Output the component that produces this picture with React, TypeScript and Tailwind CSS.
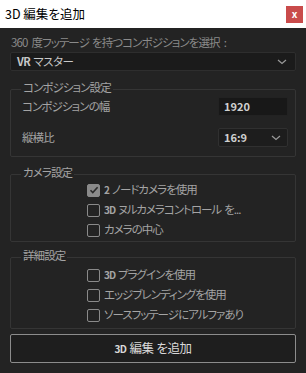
import React from 'react';

const Chevron: React.FC = () => (
    <svg width="10" height="6" viewBox="0 0 10 6" className="text-[#9a9a9a]">
        <path d="M1 1l4 3.5L9 1" fill="none" stroke="currentColor" strokeWidth="1.2" />
    </svg>
);

const Check: React.FC<{ checked?: boolean; label: React.ReactNode }> = ({ checked, label }) => (
    <div className="flex items-center h-[20px] gap-[4px]">
        <div className={`w-[13px] h-[13px] border-[1.5px] border-[#8a8a8a] rounded-[2px] flex items-center justify-center ${checked ? 'bg-[#8a8a8a]' : ''}`}>
            {checked && (
                <svg width="10" height="10" viewBox="0 0 10 10">
                    <path d="M1.5 5.2l2.3 2.3L8.6 2.3" fill="none" stroke="#2a2a2a" strokeWidth="1.6" />
                </svg>
            )}
        </div>
        <span className="text-[11.5px] tracking-[-1px] text-[#a4a4a4] leading-none whitespace-nowrap">{label}</span>
    </div>
);

const Group: React.FC<{ title: string; children: React.ReactNode; className?: string }> = ({ title, children, className }) => (
    <div className={`relative border border-[#353535] rounded-[2px] mx-[10px] ${className ?? ''}`}>
        <span className="absolute -top-[8px] left-[10px] px-[2px] bg-[#232323] text-[11.5px] tracking-[-0.9px] leading-none text-[#a4a4a4]">{title}</span>
        {children}
    </div>
);

export default function App() {
    return (
        <div className="w-[306px] h-[373px] bg-[#232323] flex flex-col overflow-hidden font-['Noto_Sans_CJK_JP','Noto_Sans',sans-serif] [font-feature-settings:'palt']">
            <div className="h-[28px] bg-white flex items-center justify-between pl-[5px] pr-[3px] shrink-0">
                <span className="text-[12.5px] text-black leading-none">3D 編集を追加</span>
                <div className="w-[17px] h-[17px] bg-[#c94b4b] flex items-center justify-center text-white text-[10px] font-bold leading-none">x</div>
            </div>

            <div className="mt-[7px] h-[16px] px-[11px] flex items-center text-[11.5px] tracking-[-0.9px] text-[#8a8a8a] leading-none whitespace-nowrap">
                <span className="mr-[4px]">360</span>度フッテージ<span className="ml-[3px]">を持つコンポジションを選択</span><span className="ml-[4px]">:</span>
            </div>
            <div className="mt-[1px] mx-[10px] h-[19px] bg-[#1b1b1b] border border-[#2e2e2e] rounded-[2px] flex items-center justify-between pl-[6px] pr-[8px]">
                <span className="text-[11.5px] tracking-[-0.5px] text-[#c8c8c8] leading-none"><b className="text-[11px] mr-[3px]">VR</b>マスター</span>
                <Chevron />
            </div>

            <Group title="コンポジション設定" className="mt-[18px] h-[68px]">
                <div className="flex flex-col pl-[11px] pr-[7px] pt-[7px] gap-[12px]">
                    <div className="flex items-center justify-between h-[19px]">
                        <span className="text-[11.5px] tracking-[-0.9px] text-[#a4a4a4] leading-none">コンポジションの幅</span>
                        <div className="w-[70px] h-[19px] bg-[#181818] border border-[#222] flex items-center pl-[5px] text-[11px] text-[#d0d0d0] leading-none font-bold">1920</div>
                    </div>
                    <div className="flex items-center justify-between h-[19px]">
                        <span className="text-[11.5px] tracking-[-0.9px] text-[#a4a4a4] leading-none">縦横比</span>
                        <div className="w-[70px] h-[19px] bg-[#1d1d1d] border border-[#303030] rounded-[2px] flex items-center justify-between pl-[5px] pr-[6px] text-[11px] text-[#d0d0d0] leading-none font-bold">
                            16:9
                            <Chevron />
                        </div>
                    </div>
                </div>
            </Group>

            <Group title="カメラ設定" className="mt-[17px] h-[68px]">
                <div className="flex flex-col pl-[76px] pt-[5px]">
                    <Check checked label={<><b className="text-[10px] mr-[3px]">2</b>ノードカメラを使用</>} />
                    <Check label={<><b className="text-[10px] mr-[3px]">3D</b>ヌルカメラコントロール<span className="ml-[3px]">を...</span></>} />
                    <Check label="カメラの中心" />
                </div>
            </Group>

            <Group title="詳細設定" className="mt-[15px] h-[72px]">
                <div className="flex flex-col pl-[76px] pt-[7px]">
                    <Check label={<><b className="text-[10px] mr-[3px]">3D</b>プラグインを使用</>} />
                    <Check label="エッジブレンディングを使用" />
                    <Check label="ソースフッテージにアルファあり" />
                </div>
            </Group>

            <button className="mt-[5px] mx-[10px] h-[29px] shrink-0 bg-[#1e1e1e] border border-[#8c8c8c] rounded-[2px] flex items-center justify-center text-[12.5px] tracking-[-0.5px] text-[#d8d8d8] leading-none">
                <b className="text-[10px] mr-[3px]">3D</b>編集<span className="ml-[3px]">を追加</span>
            </button>
        </div>
    );
}
